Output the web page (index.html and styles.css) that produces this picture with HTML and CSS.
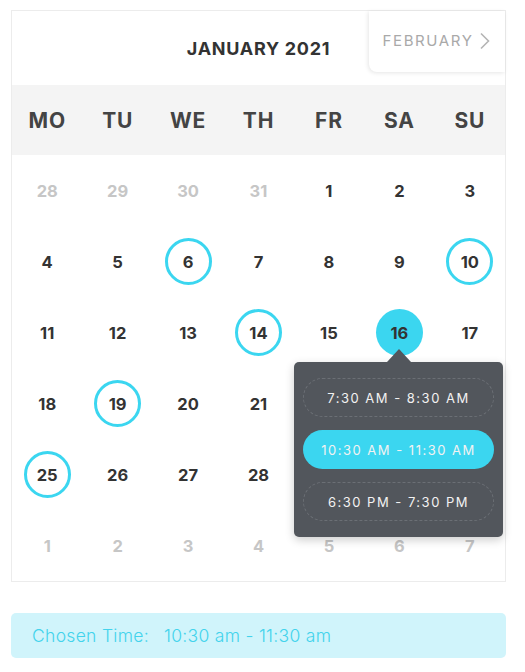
FILE: index.html
```html
<!DOCTYPE html>
<html lang="en">
<head>
    <meta charset="UTF-8">
    <meta name="viewport" content="width=device-width, initial-scale=1.0">
    <title>Calendar</title>
    <link rel="stylesheet" href="styles.css">
</head>
<body>
    <div class="calendar">
        <div class="cal-header">
            <div class="month">JANUARY 2021</div>
            <div class="next-month">
                FEBRUARY
                <svg width="12" height="18" viewBox="0 0 12 18"><path d="M2 1.5 L9.5 9 L2 16.5" fill="none" stroke="#b5b5b5" stroke-width="1.6"/></svg>
            </div>
        </div>

        <div class="weekdays">
            <div>MO</div><div>TU</div><div>WE</div><div>TH</div><div>FR</div><div>SA</div><div>SU</div>
        </div>

        <div class="days">
            <div class="day other"><span>28</span></div>
            <div class="day other"><span>29</span></div>
            <div class="day other"><span>30</span></div>
            <div class="day other"><span>31</span></div>
            <div class="day"><span>1</span></div>
            <div class="day"><span>2</span></div>
            <div class="day"><span>3</span></div>

            <div class="day"><span>4</span></div>
            <div class="day"><span>5</span></div>
            <div class="day free"><span>6</span></div>
            <div class="day"><span>7</span></div>
            <div class="day"><span>8</span></div>
            <div class="day"><span>9</span></div>
            <div class="day free"><span>10</span></div>

            <div class="day"><span>11</span></div>
            <div class="day"><span>12</span></div>
            <div class="day"><span>13</span></div>
            <div class="day free"><span>14</span></div>
            <div class="day"><span>15</span></div>
            <div class="day selected"><span>16</span></div>
            <div class="day"><span>17</span></div>

            <div class="day"><span>18</span></div>
            <div class="day free"><span>19</span></div>
            <div class="day"><span>20</span></div>
            <div class="day"><span>21</span></div>
            <div class="day"><span>22</span></div>
            <div class="day"><span>23</span></div>
            <div class="day"><span>24</span></div>

            <div class="day free"><span>25</span></div>
            <div class="day"><span>26</span></div>
            <div class="day"><span>27</span></div>
            <div class="day"><span>28</span></div>
            <div class="day"><span>29</span></div>
            <div class="day"><span>30</span></div>
            <div class="day"><span>31</span></div>

            <div class="day other"><span>1</span></div>
            <div class="day other"><span>2</span></div>
            <div class="day other"><span>3</span></div>
            <div class="day other"><span>4</span></div>
            <div class="day other"><span>5</span></div>
            <div class="day other"><span>6</span></div>
            <div class="day other"><span>7</span></div>
        </div>

        <!-- choix de l'horaire pour le 16 -->
        <div class="times">
            <div class="slot">7:30 AM - 8:30 AM</div>
            <div class="slot active">10:30 AM - 11:30 AM</div>
            <div class="slot">6:30 PM - 7:30 PM</div>
        </div>
    </div>

    <div class="chosen">
        <span>Chosen Time:</span>
        <span>10:30 am - 11:30 am</span>
    </div>
</body>
</html>
```

FILE: styles.css
```css
/* Style de base */
body {
    font-family: 'Inter', 'DejaVu Sans', sans-serif;
    margin: 0;
    padding: 10px 0 0 11px;
    background-color: #ffffff;
    color: #333333;
}

.calendar {
    position: relative;
    width: 493px;
    border: 1px solid #ececec;
    background: #fff;
}

/* En-tête du mois */
.cal-header {
    height: 74px;
    display: flex;
    align-items: center;
    justify-content: center;
    position: relative;
}

.month {
    font-size: 18px;
    font-weight: 700;
    color: #333;
    letter-spacing: 0.7px;
    margin-top: 1px;
}

.next-month {
    position: absolute;
    top: 0;
    right: 0;
    width: 136px;
    height: 61px;
    display: flex;
    align-items: center;
    justify-content: center;
    gap: 6px;
    font-size: 15px;
    color: #a9a9a9;
    letter-spacing: 1.6px;
    border-bottom-left-radius: 8px;
    box-shadow: -1px 1px 4px rgba(0, 0, 0, 0.1);
    padding-bottom: 2px;
    box-sizing: border-box;
}

/* Jours de la semaine */
.weekdays {
    display: grid;
    grid-template-columns: repeat(7, 1fr);
    height: 70px;
    align-items: center;
    background-color: #f4f4f4;
    text-align: center;
    font-size: 21px;
    font-weight: 700;
    letter-spacing: 0.8px;
    color: #444;
}

.days {
    display: grid;
    grid-template-columns: repeat(7, 1fr);
    grid-auto-rows: 71px;
}

.day {
    display: flex;
    align-items: center;
    justify-content: center;
    font-size: 16.5px;
    font-weight: 700;
    color: #333;
}

.day span {
    width: 47px;
    height: 47px;
    box-sizing: border-box;
    border-radius: 50%;
    display: flex;
    align-items: center;
    justify-content: center;
}

.day.other {
    color: #c6c6c6;
}

.day.free span {
    border: 3px solid #3bd6f0;
}

.day.selected span {
    background-color: #3bd6f0;
}

/* Fenêtre des horaires */
.times {
    position: absolute;
    left: 282px;
    top: 351px;
    width: 209px;
    box-sizing: border-box;
    padding: 16px 9px;
    background-color: #52565c;
    border-radius: 5px;
    box-shadow: 0 3px 10px rgba(0, 0, 0, 0.2);
    display: flex;
    flex-direction: column;
    gap: 13px;
}

.times::before {
    content: "";
    position: absolute;
    top: -13px;
    left: 93px;
    border-left: 12px solid transparent;
    border-right: 12px solid transparent;
    border-bottom: 13px solid #52565c;
}

.slot {
    height: 39px;
    box-sizing: border-box;
    border: 1px dashed #6b6f75;
    border-radius: 20px;
    display: flex;
    align-items: center;
    justify-content: center;
    color: #f2f2f2;
    font-size: 13px;
    letter-spacing: 1.5px;
}

.slot.active {
    background-color: #3bd6f0;
    border-color: #3bd6f0;
}

/* Heure choisie */
.chosen {
    width: 495px;
    height: 45px;
    box-sizing: border-box;
    margin-top: 31px;
    padding-left: 21px;
    background-color: #d0f4fb;
    border-radius: 5px;
    display: flex;
    align-items: center;
    gap: 15px;
    color: #43d3ec;
    font-size: 17.5px;
    font-weight: 300;
    letter-spacing: 0.3px;
}
```
